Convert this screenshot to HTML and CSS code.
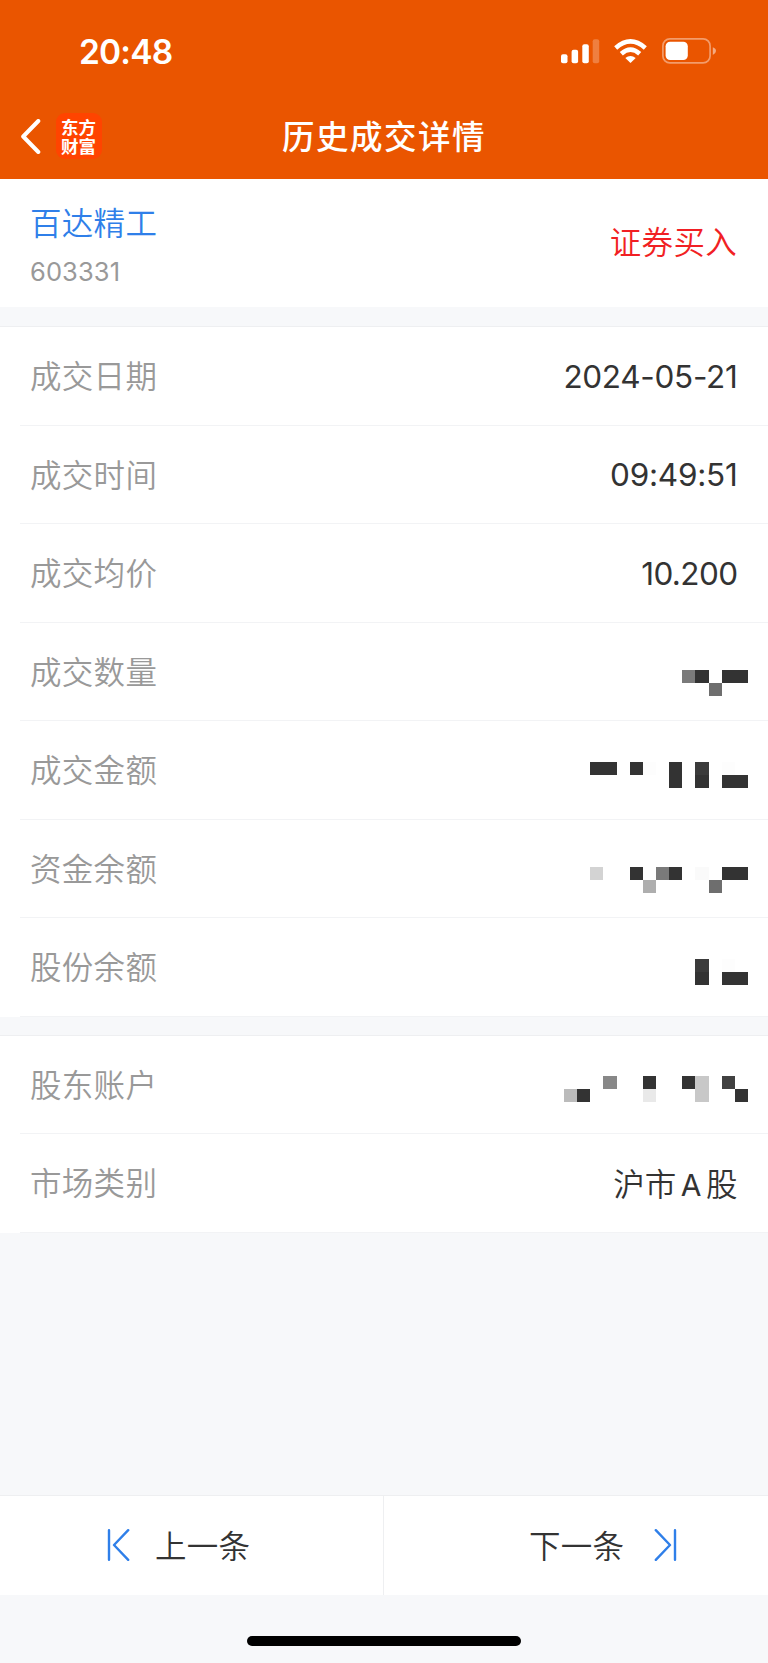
FILE: index.html
```html
<!DOCTYPE html>
<html lang="zh-CN">
<head>
    <meta charset="UTF-8">
    <meta name="viewport" content="width=device-width, initial-scale=1.0">
    <title>历史成交详情</title>
    <link rel="stylesheet" href="styles.css">
</head>
<body>
    <header class="header">
        <div class="status-bar">
            <span class="time">20:48</span>
            <div class="status-icons">
                <svg class="signal" width="39" height="25" viewBox="0 0 39 25" fill="#fff">
                    <rect x="0" y="15.3" width="6.5" height="9" rx="2"/>
                    <rect x="10.6" y="10.8" width="6.5" height="13.5" rx="2"/>
                    <rect x="21.3" y="5.3" width="6.5" height="19" rx="2"/>
                    <rect x="31.7" y="0.3" width="6.5" height="24" rx="2" opacity=".25"/>
                </svg>
                <svg class="wifi" width="33" height="24" viewBox="0 0 33 24" fill="none" stroke="#fff" stroke-width="4.6">
                    <path d="M1.7 8.9Q16.5 -4.1 31.3 8.9"/>
                    <path d="M7.3 14.8Q16.5 6.6 25.7 14.8"/>
                    <path d="M16.5 24L11.3 18.9Q16.5 15 21.7 18.9Z" fill="#fff" stroke="none"/>
                </svg>
                <svg class="battery" width="54" height="26" viewBox="0 0 54 26">
                    <rect x="0.9" y="0.9" width="47.2" height="24" rx="7" fill="none" stroke="#fff" stroke-width="1.7" opacity=".42"/>
                    <rect x="3.6" y="3.8" width="22.2" height="18.2" rx="4.5" fill="#fff"/>
                    <path d="M50.8 9.3Q54 10.6 54 13T50.8 16.9Z" fill="#fff" opacity=".5"/>
                </svg>
            </div>
        </div>
        <div class="nav-bar">
            <div class="nav-left">
                <svg width="20" height="35" viewBox="0 0 20 35" fill="none" stroke="#fff" stroke-width="4" stroke-linecap="round" stroke-linejoin="round">
                    <path d="M17.3 2L2.2 17.5L17.3 33"/>
                </svg>
                <div class="logo">东方<br>财富</div>
            </div>
            <h1>历史成交详情</h1>
        </div>
    </header>

    <section class="stock">
        <div>
            <p class="stock-name">百达精工</p>
            <p class="stock-code">603331</p>
        </div>
        <span class="trade-type">证券买入</span>
    </section>

    <ul class="list">
        <li><span class="label">成交日期</span><span class="value date">2024-05-21</span></li>
        <li><span class="label">成交时间</span><span class="value clock">09:49:51</span></li>
        <li><span class="label">成交均价</span><span class="value price">10.200</span></li>
        <li>
            <span class="label">成交数量</span>
            <svg class="mosaic low" viewBox="0 0 14 2" fill="#333">
                <path d="M10 0h1v1h-1zM12 0h2v1h-2z"/>
                <path d="M9 0h1v1h-1z" fill="#7a7a7a"/>
                <path d="M11 1h1v1h-1z" fill="#6e6e6e"/>
            </svg>
        </li>
        <li>
            <span class="label">成交金额</span>
            <svg class="mosaic" viewBox="0 0 14 2" fill="#333">
                <path d="M2 0h2v1h-2zM5 0h1v1h-1zM8 0h1v2h-1zM10 1h1v1h-1zM12 1h2v1h-2z"/>
                <path d="M10 0h1v1h-1z" fill="#3b3b3b"/>
                <path d="M6 0h1v1h-1zM12 0h1v1h-1z" fill="#fdfdfd"/>
            </svg>
        </li>
        <li>
            <span class="label">资金余额</span>
            <svg class="mosaic low" viewBox="0 0 14 2" fill="#333">
                <path d="M5 0h1v1h-1zM8 0h1v1h-1zM12 0h2v1h-2z"/>
                <path d="M2 0h1v1h-1z" fill="#d3d3d3"/>
                <path d="M6 1h1v1h-1z" fill="#aeaeae"/>
                <path d="M7 0h1v1h-1z" fill="#7a7a7a"/>
                <path d="M10 0h1v1h-1z" fill="#fafafa"/>
                <path d="M11 1h1v1h-1z" fill="#6e6e6e"/>
            </svg>
        </li>
        <li>
            <span class="label">股份余额</span>
            <svg class="mosaic" viewBox="0 0 14 2" fill="#333">
                <path d="M10 1h1v1h-1zM12 1h2v1h-2z"/>
                <path d="M10 0h1v1h-1z" fill="#3b3b3b"/>
                <path d="M12 0h1v1h-1z" fill="#fdfdfd"/>
            </svg>
        </li>
    </ul>

    <ul class="list">
        <li>
            <span class="label">股东账户</span>
            <svg class="mosaic" viewBox="0 0 14 2" fill="#333">
                <path d="M1 1h1v1h-1zM6 0h1v1h-1zM9 0h1v1h-1zM13 1h1v1h-1z"/>
                <path d="M0 1h1v1h-1z" fill="#bbb"/>
                <path d="M3 0h1v1h-1z" fill="#888"/>
                <path d="M6 1h1v1h-1z" fill="#e9e9e9"/>
                <path d="M10 0h1v2h-1z" fill="#c8c8c8"/>
                <path d="M12 0h1v1h-1z" fill="#414141"/>
            </svg>
        </li>
        <li><span class="label">市场类别</span><span class="value market">沪市<span class="latin">A</span>股</span></li>
    </ul>

    <footer class="pager">
        <button type="button" class="prev">
            <svg width="23" height="32" viewBox="0 0 23 32">
                <path d="M2 1.2V30.8M21.2 1.2L7 16L21.2 30.8"/>
            </svg>
            <span>上一条</span>
        </button>
        <button type="button" class="next">
            <span>下一条</span>
            <svg width="23" height="32" viewBox="0 0 23 32">
                <path d="M21 1.2V30.8M1.8 1.2L16 16L1.8 30.8"/>
            </svg>
        </button>
    </footer>
    <div class="home-bar"></div>
</body>
</html>
```

FILE: styles.css
```css
* {
    margin: 0;
    padding: 0;
    box-sizing: border-box;
}
body {
    display: flex;
    flex-direction: column;
    height: 1663px;
    background-color: #f7f8fa;
    font-family: Inter, "Noto Sans CJK SC", sans-serif;
    font-size: 31.5px;
    font-weight: 350;
    color: #333;
}
svg {
    display: block;
    flex: none;
}

/* header */
.header {
    height: 179px;
    background-color: #ea5500;
    color: #fff;
}
.status-bar {
    display: flex;
    justify-content: space-between;
    align-items: center;
    height: 102px;
    padding: 0 52px 0 79px;
}
.time {
    padding-top: 1px;
    font-size: 33.5px;
    font-weight: 600;
    line-height: 40px;
    letter-spacing: -0.8px;
}
.status-icons {
    display: flex;
    align-items: center;
}
.wifi {
    margin: 0 15px 0 14px;
}
.nav-bar {
    display: flex;
    align-items: center;
    height: 68px;
    padding-left: 20.5px;
}
.nav-left {
    display: flex;
    align-items: center;
    gap: 15px;
    width: 261.5px;
}
.logo {
    width: 46px;
    height: 46px;
    padding-top: 4px;
    border-radius: 9px;
    background-color: #ff4400;
    font-family: "Noto Sans CJK SC", sans-serif;
    font-size: 17.5px;
    font-weight: 700;
    line-height: 19px;
    text-align: center;
}
h1 {
    padding-top: 3px;
    font-size: 32.5px;
    font-weight: 500;
    line-height: 44px;
    letter-spacing: 1.5px;
}

/* stock info */
.stock {
    display: flex;
    justify-content: space-between;
    align-items: center;
    height: 128px;
    padding: 4px 31px 0 30px;
    background-color: #fff;
}
.stock-name {
    line-height: 44px;
    letter-spacing: 0.3px;
    color: #2f7fe9;
}
.stock-code {
    margin-top: 10px;
    font-size: 25.5px;
    font-weight: 400;
    line-height: 32px;
    letter-spacing: 0.1px;
    color: #999;
}
.trade-type {
    margin-bottom: 10px;
    letter-spacing: 0.3px;
    color: #f11f24;
}

/* rows */
.list {
    margin-top: 19px;
    border-top: 1px solid #eeeff1;
    background-color: #fff;
    list-style: none;
}
.list + .list {
    margin-top: 18px;
}
.list li {
    display: flex;
    justify-content: space-between;
    align-items: center;
    height: 98.5px;
    margin-left: 20px;
    padding: 0 30px 0 10px;
    border-bottom: 1px solid #f2f3f5;
}
.label {
    margin-bottom: 3px;
    letter-spacing: 0.3px;
    color: #999;
}
.value {
    padding-top: 1px;
    margin-right: 0.5px;
    font-weight: 400;
}
.date {
    letter-spacing: -0.3px;
}
.clock {
    letter-spacing: -0.25px;
}
.price {
    letter-spacing: -0.6px;
}
.market {
    padding: 0;
    margin-bottom: 2px;
    font-weight: 350;
}
.latin {
    margin: 0 4.5px;
    font-size: 30px;
    font-weight: 400;
}
.mosaic {
    width: 184px;
    height: 26.3px;
    margin: 10.5px -10.4px 0 0;
    shape-rendering: crispEdges;
}
.mosaic.low {
    margin-top: 24px;
}

/* pager */
.pager {
    display: flex;
    height: 100.5px;
    margin-top: auto;
    border-top: 1px solid #eeeff1;
    background-color: #fff;
}
.pager button {
    display: flex;
    align-items: center;
    gap: 25px;
    width: 50%;
    border: none;
    background: none;
    font: inherit;
    letter-spacing: 0.3px;
    color: #333;
}
.pager span {
    margin-bottom: 2px;
}
.pager svg {
    fill: none;
    stroke: #2f7fe9;
    stroke-width: 2.4;
    stroke-linecap: round;
    stroke-linejoin: round;
}
.pager .prev {
    padding-left: 107px;
    border-right: 1px solid #eeeff1;
}
.pager .next {
    gap: 30px;
    padding-left: 145px;
}
.home-bar {
    flex: none;
    width: 274px;
    height: 10px;
    margin: 41px auto 17px 247px;
    border-radius: 5px;
    background-color: #000;
}
```
